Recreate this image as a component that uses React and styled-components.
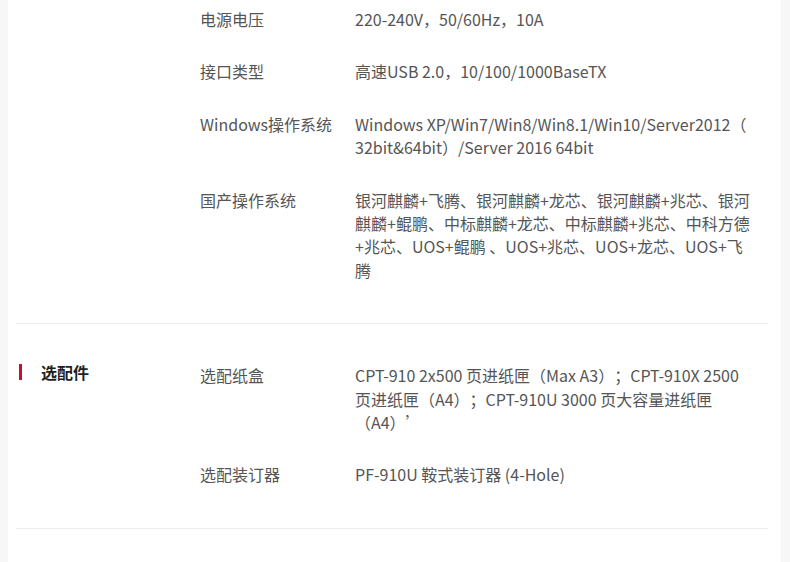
import React from "react";
import styled, { createGlobalStyle } from "styled-components";

const Global = createGlobalStyle`
  html, body { margin: 0; padding: 0; background: #f7f7f7; }
  body { font-family: "Noto Sans CJK SC", "Noto Sans", sans-serif; }
`;

const Card = styled.div`
  margin: 0 9px 0 8px;
  background: #fff;
  padding: 0 13px 0 8px;
  min-height: 562px;
`;

const Section = styled.section`
  display: grid;
  grid-template-columns: 184px 1fr;
  padding: ${(p) => (p.$first ? "8px 0 41px" : "40px 0 41px")};
  border-bottom: 1px solid #ececec;
`;

const Title = styled.div`
  display: flex;
  align-items: flex-start;
  gap: 19px;
  padding-left: 3px;
  font-size: 16px;
  font-weight: 700;
  line-height: 16px;
  color: #1f1f1f;
  &::before {
    content: "";
    display: ${(p) => (p.$empty ? "none" : "block")};
    width: 3px;
    height: 16px;
    background: #c8102e;
  }
`;

const Rows = styled.div`
  display: flex;
  flex-direction: column;
  gap: 29px;
`;

const Row = styled.div`
  display: grid;
  grid-template-columns: 155px 400px;
  font-size: 16px;
  line-height: 23.4px;
  color: #555;
  text-spacing-trim: space-all;
`;

const Label = styled.div``;
const Value = styled.div`
  line-break: ${(p) => (p.$anywhere ? "anywhere" : "normal")};
`;

const sections = [
  {
    title: "",
    rows: [
      ["电源电压", "220-240V，50/60Hz，10A"],
      ["接口类型", "高速USB 2.0，10/100/1000BaseTX"],
      ["Windows操作系统", "Windows XP/Win7/Win8/Win8.1/Win10/Server2012（32bit&64bit）/Server 2016 64bit", true],
      ["国产操作系统", "银河麒麟+飞腾、银河麒麟+龙芯、银河麒麟+兆芯、银河麒麟+鲲鹏、中标麒麟+龙芯、中标麒麟+兆芯、中科方德+兆芯、UOS+鲲鹏 、UOS+兆芯、UOS+龙芯、UOS+飞腾"],
    ],
  },
  {
    title: "选配件",
    rows: [
      ["选配纸盒", "CPT-910 2x500 页进纸匣（Max A3）；CPT-910X 2500 页进纸匣（A4）；CPT-910U 3000 页大容量进纸匣（A4）’"],
      ["选配装订器", "PF-910U 鞍式装订器 (4-Hole)"],
    ],
  },
];

export default function App() {
  return (
    <>
      <Global />
      <Card>
        {sections.map((s, i) => (
          <Section key={i} $first={i === 0}>
            <Title $empty={!s.title}>{s.title}</Title>
            <Rows>
              {s.rows.map(([k, v, anywhere]) => (
                <Row key={k}>
                  <Label>{k}</Label>
                  <Value $anywhere={!!anywhere}>{v}</Value>
                </Row>
              ))}
            </Rows>
          </Section>
        ))}
      </Card>
    </>
  );
}
